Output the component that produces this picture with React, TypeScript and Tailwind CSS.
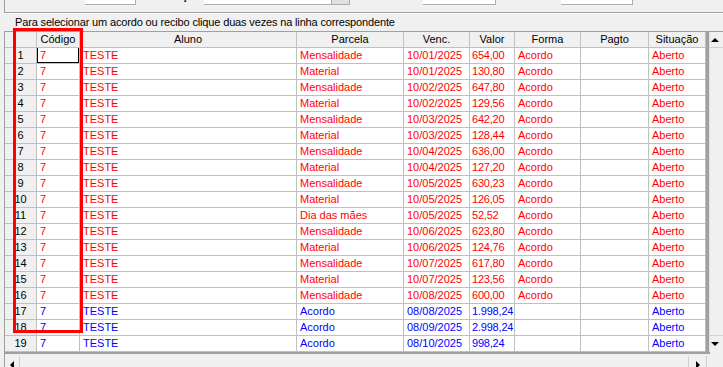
import React from "react";

type Row = { parcela: string; venc: string; valor: string; forma: string; blue?: boolean };

const rows: Row[] = [
  { parcela: "Mensalidade", venc: "10/01/2025", valor: "654,00", forma: "Acordo" },
  { parcela: "Material", venc: "10/01/2025", valor: "130,80", forma: "Acordo" },
  { parcela: "Mensalidade", venc: "10/02/2025", valor: "647,80", forma: "Acordo" },
  { parcela: "Material", venc: "10/02/2025", valor: "129,56", forma: "Acordo" },
  { parcela: "Mensalidade", venc: "10/03/2025", valor: "642,20", forma: "Acordo" },
  { parcela: "Material", venc: "10/03/2025", valor: "128,44", forma: "Acordo" },
  { parcela: "Mensalidade", venc: "10/04/2025", valor: "636,00", forma: "Acordo" },
  { parcela: "Material", venc: "10/04/2025", valor: "127,20", forma: "Acordo" },
  { parcela: "Mensalidade", venc: "10/05/2025", valor: "630,23", forma: "Acordo" },
  { parcela: "Material", venc: "10/05/2025", valor: "126,05", forma: "Acordo" },
  { parcela: "Dia das mães", venc: "10/05/2025", valor: "52,52", forma: "Acordo" },
  { parcela: "Mensalidade", venc: "10/06/2025", valor: "623,80", forma: "Acordo" },
  { parcela: "Material", venc: "10/06/2025", valor: "124,76", forma: "Acordo" },
  { parcela: "Mensalidade", venc: "10/07/2025", valor: "617,80", forma: "Acordo" },
  { parcela: "Material", venc: "10/07/2025", valor: "123,56", forma: "Acordo" },
  { parcela: "Mensalidade", venc: "10/08/2025", valor: "600,00", forma: "Acordo" },
  { parcela: "Acordo", venc: "08/08/2025", valor: "1.998,24", forma: "", blue: true },
  { parcela: "Acordo", venc: "08/09/2025", valor: "2.998,24", forma: "", blue: true },
  { parcela: "Acordo", venc: "08/10/2025", valor: "998,24", forma: "", blue: true },
];

const headers = ["", "Código", "Aluno", "Parcela", "Venc.", "Valor", "Forma", "Pagto", "Situação"];

const cell =
  "h-[16px] border-r border-b border-[#c0c0c0] px-[3px] leading-[15px] whitespace-nowrap overflow-hidden";

export default function App() {
  return (
    <div
      className="relative w-[723px] h-[367px] overflow-hidden bg-[#f0f0f0] text-[11px] text-black"
      style={{ fontFamily: '"Liberation Sans", Arial, sans-serif' }}
    >
      {/* top strip (group box bottom edge with clipped controls) */}
      <div className="ml-[4px] h-[13px] border-l border-b border-[#a0a0a0] flex items-start">
        <div className="ml-[80px] w-[51px] h-[5px] bg-white border-r border-b border-[#acacac]" />
        <div className="ml-[19px] w-[46px] h-[3px] overflow-hidden">
          <div className="-mt-[10px] font-bold leading-[13px]">Situação</div>
        </div>
        <div className="ml-[3px] w-[146px] h-[5px] bg-white border-r border-b border-[#acacac] flex justify-end">
          <div className="w-[18px] h-full bg-[#e1e1e1] border-l border-[#adadad]" />
        </div>
        <div className="ml-[73px] w-[73px] h-[5px] bg-white border-r border-b border-[#acacac]" />
        <div className="ml-[7px] w-[50px] h-[3px] overflow-hidden">
          <div className="-mt-[10px] leading-[13px]">Data Final</div>
        </div>
        <div className="ml-[8px] w-[72px] h-[5px] bg-white border-r border-b border-[#acacac]" />
      </div>
      <div className="h-[1px] ml-[5px] bg-white" />

      {/* instruction */}
      <div className="h-[17px] pl-[15px] leading-[17px] tracking-[-0.15px]">
        Para selecionar um acordo ou recibo clique duas vezes na linha correspondente
      </div>

      {/* grid frame */}
      <div className="ml-[4px] border-l border-t border-[#a0a0a0] flex flex-col">
        <div className="flex">
          <div className="grid grid-cols-[32px_43px_217px_107px_66px_45px_66px_68px_57px] bg-white">
            {headers.map((h, i) => (
              <div key={"h" + i} className={cell + " bg-[#f0f0f0] text-center"}>
                {h}
              </div>
            ))}
            {rows.map((r, i) => {
              const color = r.blue ? "text-[#0000ff]" : "text-[#ff0000]";
              return (
                <React.Fragment key={i}>
                  <div className={cell + " bg-[#f0f0f0] text-center"}>{i + 1}</div>
                  <div className={cell + " relative " + color}>
                    7
                    {i === 0 && (
                      <div className="absolute left-0 top-[-1px] right-0 bottom-[-1px] border border-b-2 border-black" />
                    )}
                  </div>
                  <div className={cell + " " + color}>TESTE</div>
                  <div className={cell + " " + color}>{r.parcela}</div>
                  <div className={cell + " " + color}>{r.venc}</div>
                  <div className={cell + " !px-[2px] tracking-[-0.2px] " + color}>{r.valor}</div>
                  <div className={cell + " " + color}>{r.forma}</div>
                  <div className={cell + " " + color}></div>
                  <div className={cell + " " + color}>Aberto</div>
                </React.Fragment>
              );
            })}
          </div>
          <div className="w-[4px] bg-[#a0a0a0]" />
          {/* vertical scrollbar */}
          <div className="w-[17px] flex flex-col bg-[#f0f0f0] border-l border-[#e0e0e0]">
            <div className="h-[16px] flex items-center justify-center border-b border-[#d0d0d0]">
              <div className="w-0 h-0 border-l-[4px] border-r-[4px] border-b-[4px] border-l-transparent border-r-transparent border-b-black -ml-[3px]" />
            </div>
            <div className="flex-1" />
            <div className="h-[17px] flex items-center justify-center border-t border-[#d0d0d0]">
              <div className="w-0 h-0 border-l-[4px] border-r-[4px] border-t-[4px] border-l-transparent border-r-transparent border-t-black -ml-[3px]" />
            </div>
          </div>
        </div>
        <div className="h-[2px] w-[705px] bg-[#a0a0a0]" />
        {/* horizontal scrollbar */}
        <div className="h-[17px] mt-[2px] flex">
          <div className="w-[15px] flex items-center justify-center border-r border-[#d0d0d0]">
            <div className="w-0 h-0 border-t-[4px] border-b-[4px] border-r-[4px] border-t-transparent border-b-transparent border-r-black" />
          </div>
          <div className="flex-1" />
          <div className="w-[18px] flex items-center justify-center border-l border-[#d0d0d0]">
            <div className="w-0 h-0 border-t-[4px] border-b-[4px] border-l-[4px] border-t-transparent border-b-transparent border-l-black" />
          </div>
          <div className="w-[17px] bg-[#f0f0f0] border-l border-[#d0d0d0]" />
        </div>
      </div>

      {/* red annotation rectangle */}
      <div className="absolute left-[13px] top-[28px] w-[70px] h-[305px] border-[3px] border-[#ff0000] pointer-events-none" />
    </div>
  );
}
